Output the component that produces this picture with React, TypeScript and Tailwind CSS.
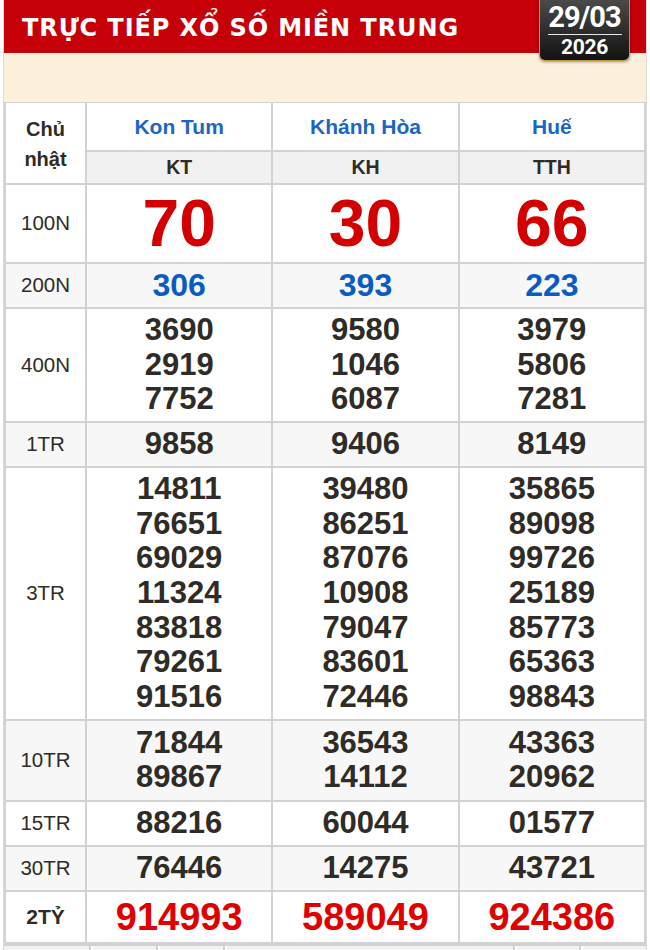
import React from 'react';

type Prize = {
  label: string;
  values: string[][];
  kind: 'g8' | 'g7' | 'normal' | 'db';
  shaded?: boolean;
};

const provinces = [
  { name: 'Kon Tum', code: 'KT' },
  { name: 'Khánh Hòa', code: 'KH' },
  { name: 'Huế', code: 'TTH' },
];

const prizes: Prize[] = [
  { label: '100N', kind: 'g8', values: [['70'], ['30'], ['66']] },
  { label: '200N', kind: 'g7', shaded: true, values: [['306'], ['393'], ['223']] },
  {
    label: '400N',
    kind: 'normal',
    values: [
      ['3690', '2919', '7752'],
      ['9580', '1046', '6087'],
      ['3979', '5806', '7281'],
    ],
  },
  { label: '1TR', kind: 'normal', shaded: true, values: [['9858'], ['9406'], ['8149']] },
  {
    label: '3TR',
    kind: 'normal',
    values: [
      ['14811', '76651', '69029', '11324', '83818', '79261', '91516'],
      ['39480', '86251', '87076', '10908', '79047', '83601', '72446'],
      ['35865', '89098', '99726', '25189', '85773', '65363', '98843'],
    ],
  },
  {
    label: '10TR',
    kind: 'normal',
    shaded: true,
    values: [
      ['71844', '89867'],
      ['36543', '14112'],
      ['43363', '20962'],
    ],
  },
  { label: '15TR', kind: 'normal', values: [['88216'], ['60044'], ['01577']] },
  { label: '30TR', kind: 'normal', shaded: true, values: [['76446'], ['14275'], ['43721']] },
  { label: '2TỶ', kind: 'db', values: [['914993'], ['589049'], ['924386']] },
];

const numClass = (kind: Prize['kind']) => {
  switch (kind) {
    case 'g8':
      return 'text-[66px] leading-[69px] text-[#d20000]';
    case 'g7':
      return 'text-[32px] leading-[35px] text-[#0b5bc4]';
    case 'db':
      return 'text-[38px] leading-[42px] text-[#e00000]';
    default:
      return 'text-[31px] leading-[34.7px] text-[#2f2b26]';
  }
};

const cell = 'border-2 border-[#d2d2d2]';

export default function App() {
  return (
    <div className="w-[650px] h-[950px] overflow-hidden bg-white font-['Liberation_Sans',Arial,sans-serif]">
      <div className="mx-[3px] border-x border-[#d8d8d8]">
        {/* Title bar */}
        <div className="relative">
          <div className="h-[53px] bg-[#c50008] flex items-center pl-[18px] pt-[2px]">
            <h1 className="font-['DejaVu_Sans',Verdana,sans-serif] font-bold text-[24px] text-white tracking-[0.9px]">
              TRỰC TIẾP XỔ SỐ MIỀN TRUNG
            </h1>
          </div>
          <div className="h-[49px] bg-[#fdf0da]" />

          {/* Date badge */}
          <div className="absolute top-0 right-[16px] w-[91px] h-[61px] rounded-b-[6px] border border-t-0 border-[#b8953e] bg-gradient-to-b from-[#4a4a4a] to-[#141414] shadow-[0_1px_3px_rgba(0,0,0,0.4)] flex flex-col items-center font-['Roboto',sans-serif] font-bold text-white">
            <div className="text-[29px] leading-[31px] tracking-[-1px] mt-[2px]">29/03</div>
            <div className="w-[74px] h-px bg-[#e8e8e8] mt-[1px]" />
            <div className="text-[21px] leading-[24px] tracking-[-0.3px]">2026</div>
          </div>
        </div>

        {/* Results table */}
        <table className="w-full table-fixed border-collapse -mt-[1px]">
          <colgroup>
            <col className="w-[81px]" />
            <col />
            <col />
            <col />
          </colgroup>
          <thead>
            <tr>
              <th
                rowSpan={2}
                className={`${cell} text-[20px] leading-[30px] font-bold text-[#2f2b26] pt-[1px]`}
              >
                Chủ
                <br />
                nhật
              </th>
              {provinces.map((p) => (
                <th key={p.name} className={`${cell} h-[49px] text-[21px] font-bold text-[#1a66c4]`}>
                  {p.name}
                </th>
              ))}
            </tr>
            <tr>
              {provinces.map((p) => (
                <th key={p.code} className={`${cell} h-[33px] bg-[#f1f1f1] text-[19.5px] font-bold text-[#2f2b26]`}>
                  {p.code}
                </th>
              ))}
            </tr>
          </thead>
          <tbody>
            {prizes.map((prize) => (
              <tr key={prize.label} className={prize.shaded ? 'bg-[#f7f7f7]' : 'bg-white'}>
                <td
                  className={`${cell} text-center text-[#2f2b26] ${
                    prize.kind === 'db' ? 'text-[21px] font-bold' : 'text-[20.5px]'
                  }`}
                >
                  {prize.label}
                </td>
                {prize.values.map((nums, i) => (
                  <td
                    key={i}
                    className={`${cell} text-center font-bold ${
                      nums.length === 2 ? 'py-[5px]' : 'py-[4px]'
                    } ${numClass(prize.kind)}`}
                  >
                    {nums.map((n) => (
                      <div key={n}>{n}</div>
                    ))}
                  </td>
                ))}
              </tr>
            ))}
          </tbody>
        </table>

        {/* Next table, cut off */}
        <div className="flex h-[20px] border-t-2 border-[#d2d2d2]">
          {[88, 66, 66, 293, 65, 64].map((w, i) => (
            <div
              key={i}
              style={{ width: w }}
              className="bg-[#f2f2f2] border-r-2 border-[#d2d2d2] last:border-r-0 ml-[2px] first:ml-0"
            />
          ))}
        </div>
      </div>
    </div>
  );
}
